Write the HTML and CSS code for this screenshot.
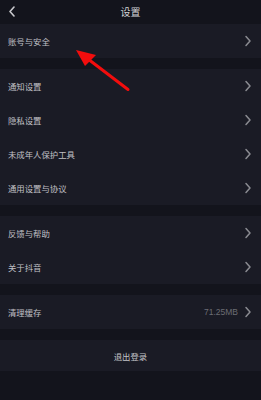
FILE: index.html
```html
<!DOCTYPE html>
<html lang="zh">
<head>
<meta charset="utf-8">
<link rel="stylesheet" href="styles.css">
</head>
<body>
<div class="page">
  <header class="header">
    <svg class="back" width="8" height="11" viewBox="0 0 8 11"><path d="M6 1 L2 5.5 L6 10" fill="none" stroke="#c9c9cd" stroke-width="1.6" stroke-linecap="round" stroke-linejoin="round"/></svg>
    <div class="title">设置</div>
  </header>

  <section class="group">
    <div class="row"><span class="label">账号与安全</span><svg class="chev" width="8" height="12" viewBox="0 0 8 12"><path d="M2 1.5 L6 6 L2 10.5" fill="none" stroke="#8a8b91" stroke-width="1.5" stroke-linecap="round" stroke-linejoin="round"/></svg></div>
  </section>

  <section class="group">
    <div class="row"><span class="label">通知设置</span><svg class="chev" width="8" height="12" viewBox="0 0 8 12"><path d="M2 1.5 L6 6 L2 10.5" fill="none" stroke="#8a8b91" stroke-width="1.5" stroke-linecap="round" stroke-linejoin="round"/></svg></div>
    <div class="row"><span class="label">隐私设置</span><svg class="chev" width="8" height="12" viewBox="0 0 8 12"><path d="M2 1.5 L6 6 L2 10.5" fill="none" stroke="#8a8b91" stroke-width="1.5" stroke-linecap="round" stroke-linejoin="round"/></svg></div>
    <div class="row"><span class="label">未成年人保护工具</span><svg class="chev" width="8" height="12" viewBox="0 0 8 12"><path d="M2 1.5 L6 6 L2 10.5" fill="none" stroke="#8a8b91" stroke-width="1.5" stroke-linecap="round" stroke-linejoin="round"/></svg></div>
    <div class="row"><span class="label">通用设置与协议</span><svg class="chev" width="8" height="12" viewBox="0 0 8 12"><path d="M2 1.5 L6 6 L2 10.5" fill="none" stroke="#8a8b91" stroke-width="1.5" stroke-linecap="round" stroke-linejoin="round"/></svg></div>
  </section>

  <section class="group">
    <div class="row"><span class="label">反馈与帮助</span><svg class="chev" width="8" height="12" viewBox="0 0 8 12"><path d="M2 1.5 L6 6 L2 10.5" fill="none" stroke="#8a8b91" stroke-width="1.5" stroke-linecap="round" stroke-linejoin="round"/></svg></div>
    <div class="row"><span class="label">关于抖音</span><svg class="chev" width="8" height="12" viewBox="0 0 8 12"><path d="M2 1.5 L6 6 L2 10.5" fill="none" stroke="#8a8b91" stroke-width="1.5" stroke-linecap="round" stroke-linejoin="round"/></svg></div>
  </section>

  <section class="group">
    <div class="row"><span class="label">清理缓存</span><span class="value">71.25MB</span><svg class="chev" width="8" height="12" viewBox="0 0 8 12"><path d="M2 1.5 L6 6 L2 10.5" fill="none" stroke="#8a8b91" stroke-width="1.5" stroke-linecap="round" stroke-linejoin="round"/></svg></div>
  </section>

  <section class="group logout">退出登录</section>

  <svg class="arrow" width="261" height="400" viewBox="0 0 261 400">
    <line x1="128" y1="89.5" x2="88" y2="59" stroke="#f20d0d" stroke-width="3" stroke-linecap="round"/>
    <polygon points="76,50 96,55 85,66" fill="#f20d0d"/>
  </svg>
</div>
</body>
</html>
```

FILE: styles.css
```css
* { box-sizing: border-box; }
html, body { margin: 0; padding: 0; }
body {
  background: #13141c;
  font-family: "Noto Sans CJK SC", "Noto Sans", sans-serif;
  color: #c4c4c8;
}
.page {
  position: relative;
  width: 261px;
  height: 400px;
  overflow: hidden;
  background: #13141c;
}
.header {
  position: relative;
  height: 24px;
  display: flex;
  align-items: center;
  justify-content: center;
}
.back {
  position: absolute;
  left: 8px;
  top: 6px;
}
.title {
  font-size: 10px;
  color: #d2d2d6;
  line-height: 1;
}
.group {
  background: #1a1b25;
  margin-bottom: 11px;
}
.row {
  height: 34px;
  display: flex;
  align-items: center;
  padding: 0 9px 0 8px;
  font-size: 8.4px;
}
.label {
  flex: 1;
  color: #c0c0c5;
}
.value {
  color: #6c6d74;
  font-family: "Liberation Sans", sans-serif;
  font-size: 8.5px;
  margin-right: 6px;
}
.chev {
  display: block;
  flex: none;
}
.logout {
  height: 31px;
  display: flex;
  align-items: center;
  justify-content: center;
  font-size: 8.4px;
  color: #c4c4c8;
}
.arrow {
  position: absolute;
  left: 0;
  top: 0;
  pointer-events: none;
}
```
